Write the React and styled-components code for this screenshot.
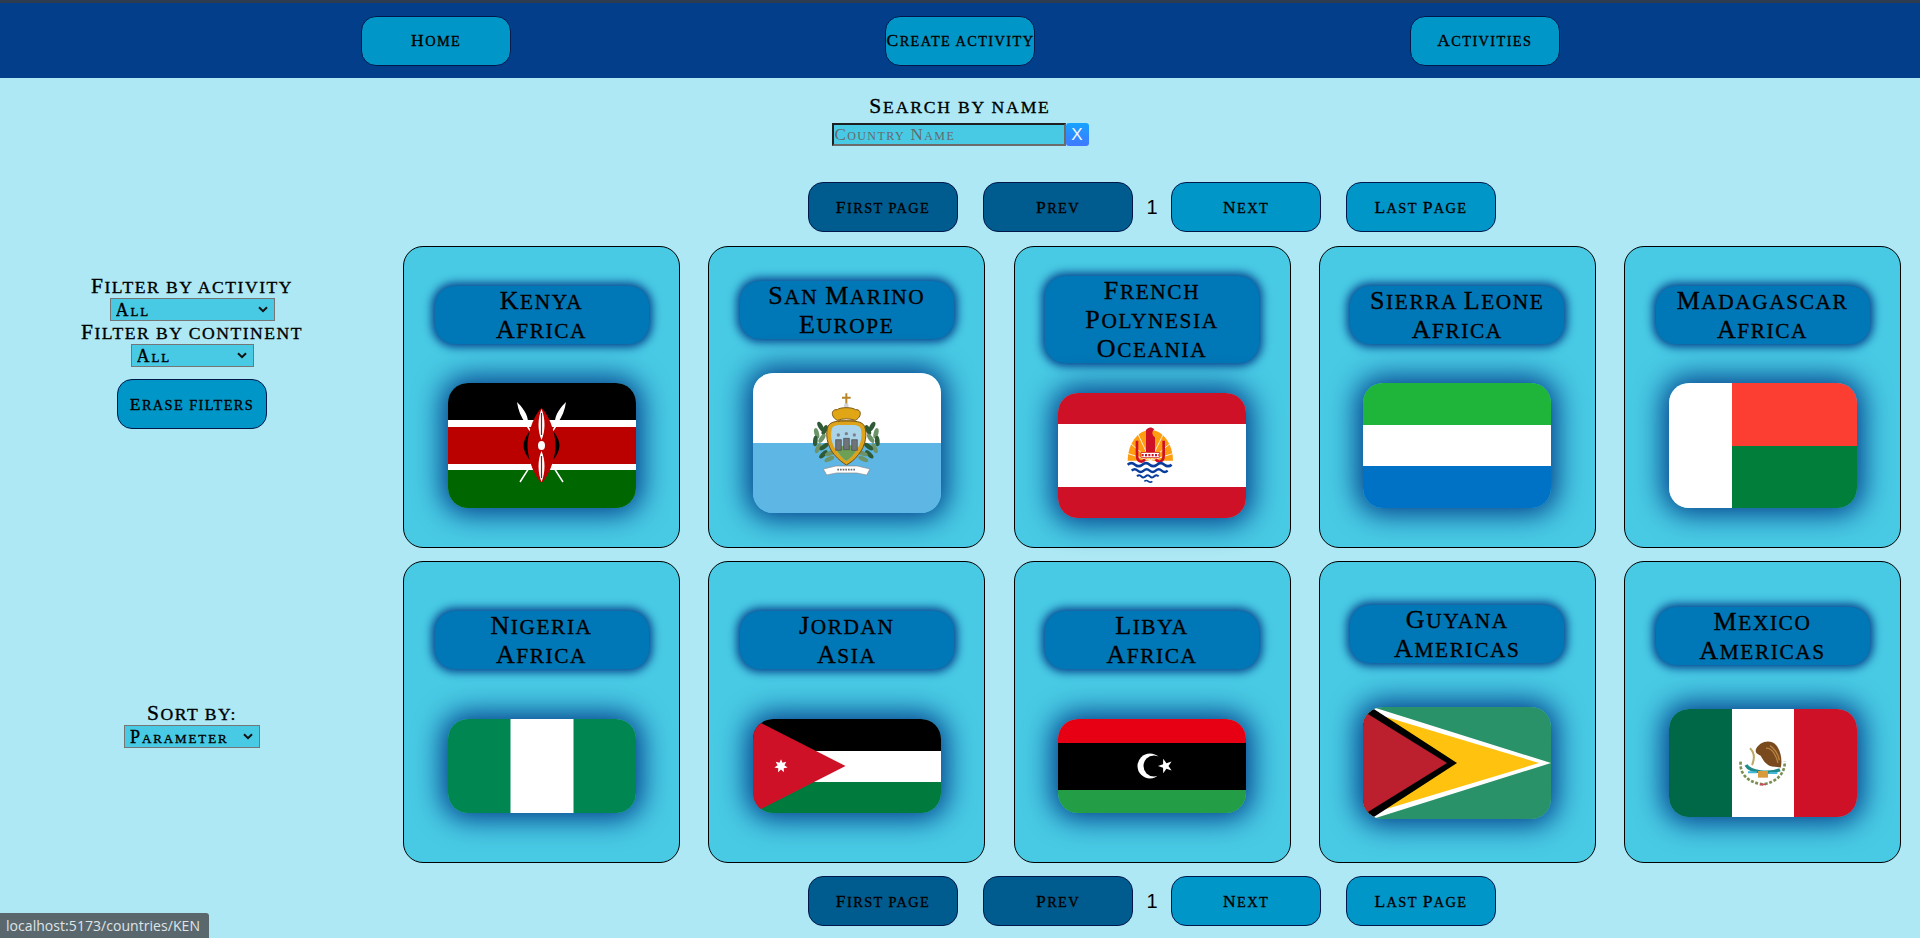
import React from 'react';
import styled, { createGlobalStyle } from 'styled-components';

const FONT = `"Liberation Serif", serif`;

const CHEVRON = `url("data:image/svg+xml,%3Csvg xmlns='http://www.w3.org/2000/svg' width='10' height='7' viewBox='0 0 10 7'%3E%3Cpath d='M1 1.2 L5 5.2 L9 1.2' fill='none' stroke='%23111' stroke-width='2'/%3E%3C/svg%3E")`;

const Global = createGlobalStyle`
  html, body { margin: 0; padding: 0; height: 938px; overflow: hidden; background: #ade8f4; }
  body { font-family: ${FONT}; color: #000; }
  * { box-sizing: border-box; }
`;

const Page = styled.div`
  width: 1920px;
  height: 938px;
  display: flex;
  flex-direction: column;
  background: #ade8f4;
  -webkit-text-stroke: 0.35px #000;
`;

const Nav = styled.nav`
  height: 78px;
  flex: none;
  border-top: 3px solid #2f3b4f;
  background: #023e8a;
  display: flex;
  align-items: center;
  justify-content: space-around;
  padding: 0 173px 0 174px;
`;

const Lower = styled.span`
  font-size: 0.82em;
  line-height: 0;
  text-transform: uppercase;
`;

const SmallCaps = ({ children }) => (
  <>
    {children.match(/[A-Z]+|[^A-Z]+/g).map((part, i) =>
      /[A-Z]/.test(part) ? part : <Lower key={i}>{part}</Lower>
    )}
  </>
);

const Button = styled.button`
  width: 150px;
  height: 50px;
  flex: none;
  padding: 0;
  border: 1px solid #03184a;
  border-radius: 15px;
  background: ${p => (p.$disabled ? '#005c8e' : '#0096c7')};
  color: #000;
  font-family: ${FONT};
  font-size: 17.5px;
  letter-spacing: 1.4px;
  white-space: nowrap;
  overflow: visible;
`;

const SearchBlock = styled.div`
  height: 104px;
  flex: none;
  padding-top: 14px;
  display: flex;
  flex-direction: column;
  align-items: center;
`;

const SearchLabel = styled.label`
  height: 31px;
  font-size: 21.500px;
  line-height: 28px;
  letter-spacing: 1.800px;
`;

const SearchRow = styled.div`
  display: flex;
`;

const SearchInput = styled.input`
  width: 234px;
  height: 23px;
  padding: 0 1px;
  border-width: 2px;
  border-style: solid;
  border-color: #1f1f1f #6b6b6b #6b6b6b #1f1f1f;
  background: #48cae4;
  font-family: ${FONT};
  font-variant: small-caps;
  font-size: 17px;
  letter-spacing: 1.400px;
  &::placeholder { color: #66696c; opacity: 1; -webkit-text-stroke: 0; }
`;

const ClearButton = styled.button`
  width: 23px;
  height: 23px;
  padding: 0;
  border: none;
  border-radius: 3px;
  background: linear-gradient(180deg, #17a3ff, #3f78ff);
  color: #f2f7ff;
  font-family: "Liberation Sans", sans-serif;
  font-size: 17px;
  line-height: 23px;
  -webkit-text-stroke: 0;
`;

const Body = styled.div`
  flex: 1;
  display: grid;
  grid-template-columns: 403px 1498px;
`;

const Sidebar = styled.aside`
  padding: 93px 19px 0 0;
  display: flex;
  flex-direction: column;
  align-items: center;
`;

const SideLabel = styled.label`
  height: 23px;
  font-size: 21.500px;
  line-height: 23px;
  letter-spacing: 1.500px;
  white-space: nowrap;
`;

const Select = styled.select`
  appearance: none;
  width: ${p => p.$w}px;
  height: 23px;
  flex: none;
  padding: 0 0 0 5px;
  border: 1px solid #767676;
  border-radius: 0;
  background: #48cae4 ${CHEVRON} no-repeat right 6px center;
  font-family: ${FONT};
  font-variant: small-caps;
  font-size: 18px;
  letter-spacing: 1.900px;
  color: #000;
  -webkit-text-stroke: 0.35px #000;
`;

const EraseButton = styled(Button)`
  margin-top: 12px;
`;

const SortBlock = styled.div`
  margin-top: 273px;
  display: flex;
  flex-direction: column;
  align-items: center;
`;

const Results = styled.main`
  display: flex;
  flex-direction: column;
  align-items: center;
`;

const Pager = styled.div`
  height: 50px;
  flex: none;
  display: flex;
  align-items: center;
  gap: 25px;
`;

const PageNumber = styled.span`
  width: 13px;
  margin: 0 -12.5px;
  font-family: "Liberation Sans", sans-serif;
  font-size: 20px;
  text-align: center;
  -webkit-text-stroke: 0;
`;

const Grid = styled.section`
  width: 1498px;
  margin: 14px 0 13px;
  display: grid;
  grid-template-columns: repeat(5, 277px);
  grid-auto-rows: 302px;
  column-gap: 28.25px;
  row-gap: 13px;
`;

const Card = styled.article`
  display: flex;
  flex-direction: column;
  align-items: center;
  justify-content: space-evenly;
  background: #48cae4;
  border: 1px solid #000;
  border-radius: 20px;
`;

const Title = styled.h2`
  width: 214px;
  margin: 0;
  background: #0077b6;
  border-radius: 20px;
  box-shadow: 0 0 10px 3px #023e8a;
  font-weight: 400;
  font-size: 26px;
  line-height: 29px;
  letter-spacing: 1.600px;
  text-align: center;
`;

const FlagFrame = styled.div`
  width: 188px;
  height: ${p => p.$h}px;
  flex: none;
  border-radius: 20px;
  overflow: hidden;
  box-shadow: 0 0 28px 6px #023e8a;
`;

const FlagSvg = styled.svg`
  display: block;
  width: 188px;
  height: 100%;
`;

const StatusBar = styled.div`
  position: fixed;
  left: 0;
  bottom: 0;
  width: 209px;
  height: 25px;
  padding-left: 6px;
  background: #5a686e;
  border-top-right-radius: 3px;
  color: #dfe4e6;
  font-family: "Open Sans", sans-serif;
  font-size: 14px;
  letter-spacing: 0.05px;
  line-height: 25px;
  white-space: nowrap;
  -webkit-text-stroke: 0;
`;

const star = (cx, cy, R, r, n, rot = -90) =>
  Array.from({ length: n * 2 }, (_, i) => {
    const a = ((rot + (i * 180) / n) * Math.PI) / 180;
    const d = i % 2 ? r : R;
    return `${(cx + d * Math.cos(a)).toFixed(2)},${(cy + d * Math.sin(a)).toFixed(2)}`;
  }).join(' ');

const Svg = ({ h, children }) => (
  <FlagSvg viewBox={`0 0 188 ${h}`} preserveAspectRatio="none">{children}</FlagSvg>
);

const Kenya = () => (
  <Svg h={125}>
    <rect width="188" height="37" fill="#000" />
    <rect y="37" width="188" height="7" fill="#fff" />
    <rect y="44" width="188" height="37" fill="#bb0000" />
    <rect y="81" width="188" height="6" fill="#fff" />
    <rect y="87" width="188" height="38" fill="#006600" />
    <path d="M72 99 L111 38 M115 99 L76 38" stroke="#fff" strokeWidth="1.500" />
    <path d="M69 19 C74 24 80 31 80 39 L78 41 C73 34 70 27 69 19Z M118 19 C113 24 107 31 107 39 L109 41 C114 34 117 27 118 19Z" fill="#fff" />
    <path d="M93.500 38 C84 44 75.500 54 75.500 62.500 C75.500 71 84 81 93.500 87 C103 81 111.500 71 111.500 62.500 C111.500 54 103 44 93.500 38Z" fill="#000" />
    <path d="M93.500 25 C86 32 79.500 50 79.500 62.500 C79.500 75 86 93 93.500 100 C101 93 107.500 75 107.500 62.500 C107.500 50 101 32 93.500 25Z" fill="#bb0000" />
    <path d="M93.500 26 C89.500 36 89.500 48 93.500 57 C97.500 48 97.500 36 93.500 26Z M93.500 99 C89.500 89 89.500 77 93.500 68 C97.500 77 97.500 89 93.500 99Z" fill="#fff" />
    <path d="M93.500 30 V52 M93.500 73 V95" stroke="#bb0000" strokeWidth="1.200" />
    <ellipse cx="93.500" cy="62.500" rx="3.500" ry="4.500" fill="#fff" />
  </Svg>
);

const LEAVES_L = [[62, 125, -30], [50, 145, -15], [46, 168, 5], [54, 190, 25], [70, 208, 45], [88, 222, 65], [74, 135, 25], [66, 160, 35], [72, 185, 55], [90, 205, 70]];

const SanMarino = () => (
  <Svg h={140}>
    <rect width="188" height="70" fill="#fff" />
    <rect y="70" width="188" height="70" fill="#5eb6e4" />
    <g transform="translate(47 12) scale(0.3333)">
      {LEAVES_L.map(([x, y, r], i) => (
        <g key={i}>
          <ellipse cx={x} cy={y} rx="7" ry="16" transform={`rotate(${r} ${x} ${y})`} fill={i % 2 ? '#6d9468' : '#2f5a36'} />
          <ellipse cx={278 - x} cy={y} rx="7" ry="16" transform={`rotate(${-r} ${278 - x} ${y})`} fill={i % 2 ? '#6d9468' : '#2f5a36'} />
        </g>
      ))}
      <path d="M136 25 h6 v10 h10 v6 h-10 v16 h-6 v-16 h-10 v-6 h10Z" fill="#b8862a" />
      <circle cx="139" cy="62" r="7" fill="#cfd3d6" />
      <path d="M112 106 C92 96 92 72 112 74 C120 66 158 66 166 74 C186 72 186 96 166 106 C150 100 128 100 112 106Z" fill="#e0a616" stroke="#7a5510" strokeWidth="3" />
      <path d="M114 106 h50 v10 h-50Z" fill="#a9740f" />
      <path d="M139 108 C115 108 92 108 84 124 C76 144 80 182 102 208 C115 224 130 234 139 240 C150 234 165 224 176 208 C198 182 202 144 194 124 C186 108 163 108 139 108Z" fill="#dca31b" stroke="#6f4f12" strokeWidth="3" />
      <path d="M139 120 C120 120 102 118 96 130 C90 150 94 178 110 198 C120 212 132 222 139 228 C147 222 158 212 168 198 C184 178 188 150 182 130 C176 118 158 120 139 120Z" fill="#a9d4ea" />
      <path d="M107 192 C125 180 150 174 174 188 C165 206 150 220 139 228 C127 220 115 206 107 192Z" fill="#6da055" />
      <path d="M107 164 h17 v32 h-17Z M131 160 h17 v34 h-17Z M155 164 h17 v32 h-17Z" fill="#6f7479" stroke="#45484c" strokeWidth="2" />
      <circle cx="115" cy="150" r="5" fill="#7d8287" />
      <circle cx="139" cy="146" r="5" fill="#7d8287" />
      <circle cx="163" cy="150" r="5" fill="#7d8287" />
      <path d="M70 252 L108 243 H172 L210 252 L200 270 L170 264 H110 L80 270Z" fill="#fff" stroke="#8a8a8a" strokeWidth="2" />
      <path d="M112 254 H168" stroke="#6d6d6d" strokeWidth="5" strokeDasharray="5 3" />
    </g>
  </Svg>
);

const FrenchPolynesia = () => (
  <Svg h={125}>
    <rect width="188" height="125" fill="#ce1126" />
    <rect y="31" width="188" height="63" fill="#fff" />
    <g transform="translate(57 27) scale(0.3333)">
      <path d="M38 122 A68 92 0 0 1 174 122 Z" fill="#ff9c10" />
      <path d="M106 122 L36 100 M106 122 L44 68 M106 122 L66 36 M106 122 L148 36 M106 122 L168 68 M106 122 L176 100" stroke="#fff" strokeWidth="2.500" />
      <path d="M93 30 C100 20 110 20 118 28 C110 34 110 46 120 52 V96 H93Z" fill="#ce1126" />
      <path d="M66 62 V106 C66 126 82 130 90 118 M146 62 V106 C146 126 130 130 122 118" fill="none" stroke="#ce1126" strokeWidth="8" />
      <rect x="78" y="98" width="56" height="15" fill="#fff" stroke="#ce1126" strokeWidth="2" />
      <path d="M80 105.500 H132" stroke="#ce1126" strokeWidth="7" strokeDasharray="6 4" />
      <path d="M38 134 q11 -9 22 0 t22 0 t22 0 t22 0 t22 0 t22 0" fill="none" stroke="#083d9c" strokeWidth="8" />
      <path d="M50 152 q9 -8 18 0 t18 0 t18 0 t18 0 t18 0 t18 0" fill="none" stroke="#083d9c" strokeWidth="7" />
      <path d="M66 169 q7 -7 13 0 t13 0 t13 0 t13 0 t13 0" fill="none" stroke="#083d9c" strokeWidth="6" />
      <path d="M88 184 q6 -5 12 0 t12 0" fill="none" stroke="#083d9c" strokeWidth="5" />
    </g>
  </Svg>
);

const SierraLeone = () => (
  <Svg h={125}>
    <rect width="188" height="42" fill="#1eb53a" />
    <rect y="42" width="188" height="41" fill="#fff" />
    <rect y="83" width="188" height="42" fill="#0072c6" />
  </Svg>
);

const Madagascar = () => (
  <Svg h={125}>
    <rect width="63" height="125" fill="#fff" />
    <rect x="63" width="125" height="63" fill="#fc3d32" />
    <rect x="63" y="63" width="125" height="62" fill="#007e3a" />
  </Svg>
);

const Nigeria = () => (
  <Svg h={94}>
    <rect width="188" height="94" fill="#008751" />
    <rect x="62.500" width="63" height="94" fill="#fff" />
  </Svg>
);

const Jordan = () => (
  <Svg h={94}>
    <rect width="188" height="32" fill="#000" />
    <rect y="32" width="188" height="31" fill="#fff" />
    <rect y="63" width="188" height="31" fill="#007a3d" />
    <path d="M0 0 L92.500 47 L0 94Z" fill="#ce1126" />
    <polygon points={star(28, 47, 6.800, 3.500, 7)} fill="#fff" />
  </Svg>
);

const Libya = () => (
  <Svg h={94}>
    <rect width="188" height="24" fill="#e70013" />
    <rect y="24" width="188" height="47" fill="#000" />
    <rect y="71" width="188" height="23" fill="#239e46" />
    <circle cx="92" cy="47" r="12.500" fill="#fff" />
    <circle cx="96" cy="47" r="10.500" fill="#000" />
    <polygon points={star(107.500, 47, 7.500, 3, 5, 180)} fill="#fff" />
  </Svg>
);

const Guyana = () => (
  <Svg h={112}>
    <rect width="188" height="112" fill="#2a9269" />
    <path d="M0 -3 L188 56 L0 115Z" fill="#fff" />
    <path d="M0 3 L176 56 L0 109Z" fill="#ffc20e" />
    <path d="M0 -5 L94 56 L0 117Z" fill="#000" />
    <path d="M0 4 L84 56 L0 108Z" fill="#bc1f2e" />
  </Svg>
);

const Mexico = () => (
  <Svg h={108}>
    <rect width="63" height="108" fill="#006847" />
    <rect x="63" width="62" height="108" fill="#fff" />
    <rect x="125" width="63" height="108" fill="#ce1126" />
    <g transform="translate(61 26) scale(0.3333)">
      <path d="M78 42 C88 22 118 10 138 30 C152 46 158 76 152 98 C140 94 130 96 118 92 C106 86 100 76 92 62 C84 58 74 54 78 42Z" fill="#7a4a1f" />
      <path d="M108 40 C122 36 136 54 144 84 M120 32 C130 38 146 56 148 76" fill="none" stroke="#b78342" strokeWidth="4" />
      <path d="M60 40 C72 52 76 68 66 90" fill="none" stroke="#b9ab68" strokeWidth="6" />
      <path d="M48 90 C60 112 118 118 150 104" fill="none" stroke="#1f8b8b" strokeWidth="10" />
      <rect x="84" y="108" width="30" height="20" fill="#d99a3c" />
      <path d="M54 112 h26 M118 114 h24" stroke="#41b6d6" strokeWidth="6" />
      <path d="M32 80 C28 115 52 142 98 148 C140 142 166 115 164 80" fill="none" stroke="#7b8f52" strokeWidth="8" strokeDasharray="9 5" />
      <path d="M90 148 h18" stroke="#cf4c66" strokeWidth="5" />
    </g>
  </Svg>
);

const COUNTRIES = [
  { name: 'Kenya', continent: 'Africa', h: 125, Flag: Kenya },
  { name: 'San Marino', continent: 'Europe', h: 140, Flag: SanMarino },
  { name: 'French Polynesia', continent: 'Oceania', h: 125, Flag: FrenchPolynesia },
  { name: 'Sierra Leone', continent: 'Africa', h: 125, Flag: SierraLeone },
  { name: 'Madagascar', continent: 'Africa', h: 125, Flag: Madagascar },
  { name: 'Nigeria', continent: 'Africa', h: 94, Flag: Nigeria },
  { name: 'Jordan', continent: 'Asia', h: 94, Flag: Jordan },
  { name: 'Libya', continent: 'Africa', h: 94, Flag: Libya },
  { name: 'Guyana', continent: 'Americas', h: 112, Flag: Guyana },
  { name: 'Mexico', continent: 'Americas', h: 108, Flag: Mexico },
];

const Pagination = () => (
  <Pager>
    <Button $disabled><SmallCaps>First page</SmallCaps></Button>
    <Button $disabled><SmallCaps>Prev</SmallCaps></Button>
    <PageNumber>1</PageNumber>
    <Button><SmallCaps>Next</SmallCaps></Button>
    <Button><SmallCaps>Last Page</SmallCaps></Button>
  </Pager>
);

export default function App() {
  return (
    <Page>
      <Global />
      <Nav>
        <Button><SmallCaps>Home</SmallCaps></Button>
        <Button><SmallCaps>Create activity</SmallCaps></Button>
        <Button><SmallCaps>Activities</SmallCaps></Button>
      </Nav>
      <SearchBlock>
        <SearchLabel><SmallCaps>Search by name</SmallCaps></SearchLabel>
        <SearchRow>
          <SearchInput placeholder="Country Name" />
          <ClearButton>X</ClearButton>
        </SearchRow>
      </SearchBlock>
      <Body>
        <Sidebar>
          <SideLabel><SmallCaps>Filter by activity</SmallCaps></SideLabel>
          <Select $w={165}><option>All</option></Select>
          <SideLabel><SmallCaps>Filter by continent</SmallCaps></SideLabel>
          <Select $w={123}><option>All</option></Select>
          <EraseButton><SmallCaps>Erase filters</SmallCaps></EraseButton>
          <SortBlock>
            <SideLabel><SmallCaps>Sort by:</SmallCaps></SideLabel>
            <Select $w={136}><option>Parameter</option></Select>
          </SortBlock>
        </Sidebar>
        <Results>
          <Pagination />
          <Grid>
            {COUNTRIES.map(({ name, continent, h, Flag }) => (
              <Card key={name}>
                <Title><SmallCaps>{name}</SmallCaps><br /><SmallCaps>{continent}</SmallCaps></Title>
                <FlagFrame $h={h}><Flag /></FlagFrame>
              </Card>
            ))}
          </Grid>
          <Pagination />
        </Results>
      </Body>
      <StatusBar>localhost:5173/countries/KEN</StatusBar>
    </Page>
  );
}
